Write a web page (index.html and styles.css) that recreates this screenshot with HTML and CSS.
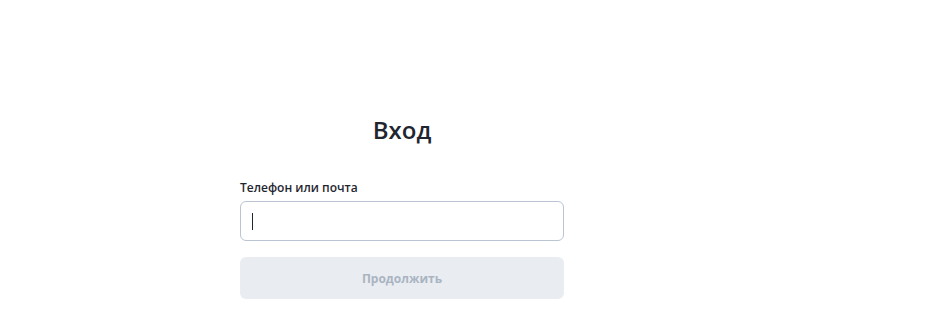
FILE: index.html
```html
<!DOCTYPE html>
<html lang="ru">
<head>
<meta charset="utf-8">
<title>Вход</title>
<link rel="stylesheet" href="styles.css">
</head>
<body>
<main class="login">
  <h1 class="login__title">Вход</h1>
  <label class="login__label">Телефон или почта</label>
  <div class="login__field"><span class="login__caret"></span></div>
  <button class="login__submit" type="button">Продолжить</button>
</main>
</body>
</html>
```

FILE: styles.css
```css
html, body {
  margin: 0;
  padding: 0;
  background: #ffffff;
}
body {
  font-family: "Open Sans", "Noto Sans", sans-serif;
  color: #1f2630;
}
.login {
  width: 324px;
  margin-left: 240px;
  padding-top: 114px;
  display: flex;
  flex-direction: column;
}
.login__title {
  margin: 0;
  font-size: 24px;
  line-height: 32px;
  font-weight: 600;
  text-align: center;
  color: #1f2630;
}
.login__label {
  margin-top: 34px;
  font-size: 12px;
  line-height: 16px;
  font-weight: 600;
  color: #1f2630;
}
.login__field {
  margin-top: 5px;
  box-sizing: border-box;
  height: 40px;
  border: 1px solid #bac4d2;
  border-radius: 6px;
  display: flex;
  align-items: center;
  padding-left: 11px;
}
.login__caret {
  width: 1px;
  height: 17px;
  background: #1f2630;
}
.login__submit {
  margin-top: 16px;
  height: 42px;
  border: none;
  border-radius: 6px;
  background: #e9ecf0;
  color: #a9b4c2;
  font-family: "Open Sans", "Noto Sans", sans-serif;
  font-size: 12px;
  font-weight: 700;
  padding: 0;
}
```
